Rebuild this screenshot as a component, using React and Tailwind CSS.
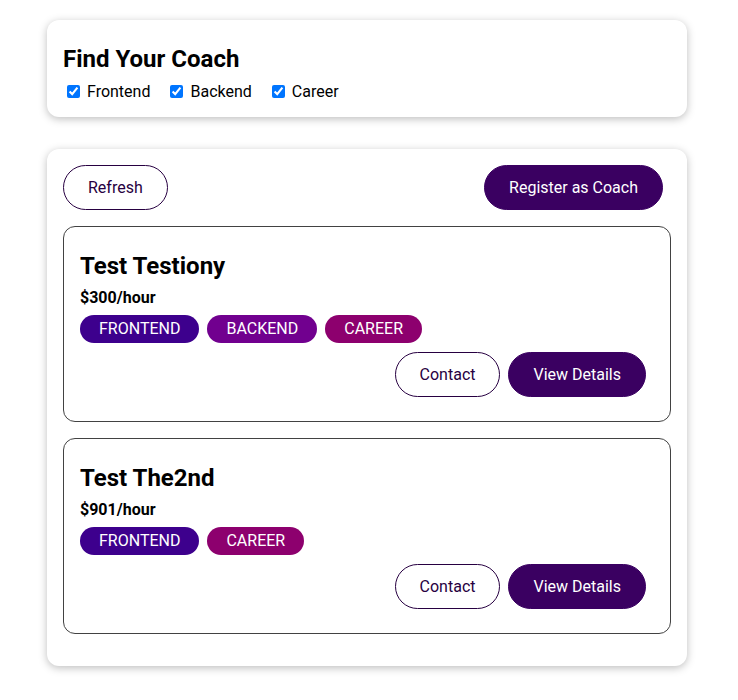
const coaches = [
  { id: "c1", name: "Test Testiony", rate: 300, areas: ["frontend", "backend", "career"] },
  { id: "c2", name: "Test The2nd", rate: 901, areas: ["frontend", "career"] },
];

const badgeColors = {
  frontend: "bg-[#3d008d]",
  backend: "bg-[#71008f]",
  career: "bg-[#8d006e]",
};

function Card({ children, className = "" }) {
  return (
    <section
      className={`ml-[47px] w-[640px] rounded-xl bg-white shadow-[0_2px_8px_rgba(0,0,0,0.26)] ${className}`}
    >
      {children}
    </section>
  );
}

function OutlineButton({ children }) {
  return (
    <button className="mr-2 h-[45px] rounded-[30px] border border-[#270041] bg-transparent px-6 text-[16px] leading-[19px] text-[#270041]">
      {children}
    </button>
  );
}

function SolidButton({ children }) {
  return (
    <button className="mr-2 h-[45px] rounded-[30px] border border-[#3a0061] bg-[#3a0061] px-6 text-[16px] leading-[19px] text-white">
      {children}
    </button>
  );
}

export default function App() {
  return (
    <div className="min-h-[700px] bg-white pt-5 font-['Roboto',sans-serif] text-black">
      <Card className="px-4 pt-[25px] pb-4">
        <h2 className="mb-[9px] text-[24px] leading-[28px] font-bold">Find Your Coach</h2>
        <div className="flex h-[19px] items-center">
          {["Frontend", "Backend", "Career"].map((label) => (
            <span key={label} className="mr-4 flex items-center">
              <input
                type="checkbox"
                defaultChecked
                id={label}
                className="m-[3px_3px_3px_4px] h-[13px] w-[13px]"
              />
              <label htmlFor={label} className="ml-1 text-[16px] leading-[19px]">
                {label}
              </label>
            </span>
          ))}
        </div>
      </Card>

      <Card className="mt-8 px-4 pt-4 pb-8">
        <div className="flex justify-between">
          <OutlineButton>Refresh</OutlineButton>
          <SolidButton>Register as Coach</SolidButton>
        </div>
        <ul>
          {coaches.map((coach) => (
            <li
              key={coach.id}
              className="mt-4 rounded-xl border border-[#424242] px-4 pt-4 pb-4"
            >
              <h3 className="mt-[9px] text-[24px] leading-[28px] font-bold">{coach.name}</h3>
              <h4 className="mt-2 text-[16px] leading-[19px] font-bold">${coach.rate}/hour</h4>
              <div className="mt-[8px] flex gap-2">
                {coach.areas.map((area) => (
                  <span
                    key={area}
                    className={`h-[28px] rounded-[30px] px-[19px] text-[16px] leading-[28px] text-white uppercase ${badgeColors[area]}`}
                  >
                    {area}
                  </span>
                ))}
              </div>
              <div className="mt-[9px] mb-2 flex justify-end">
                <OutlineButton>Contact</OutlineButton>
                <SolidButton>View Details</SolidButton>
              </div>
            </li>
          ))}
        </ul>
      </Card>
    </div>
  );
}
